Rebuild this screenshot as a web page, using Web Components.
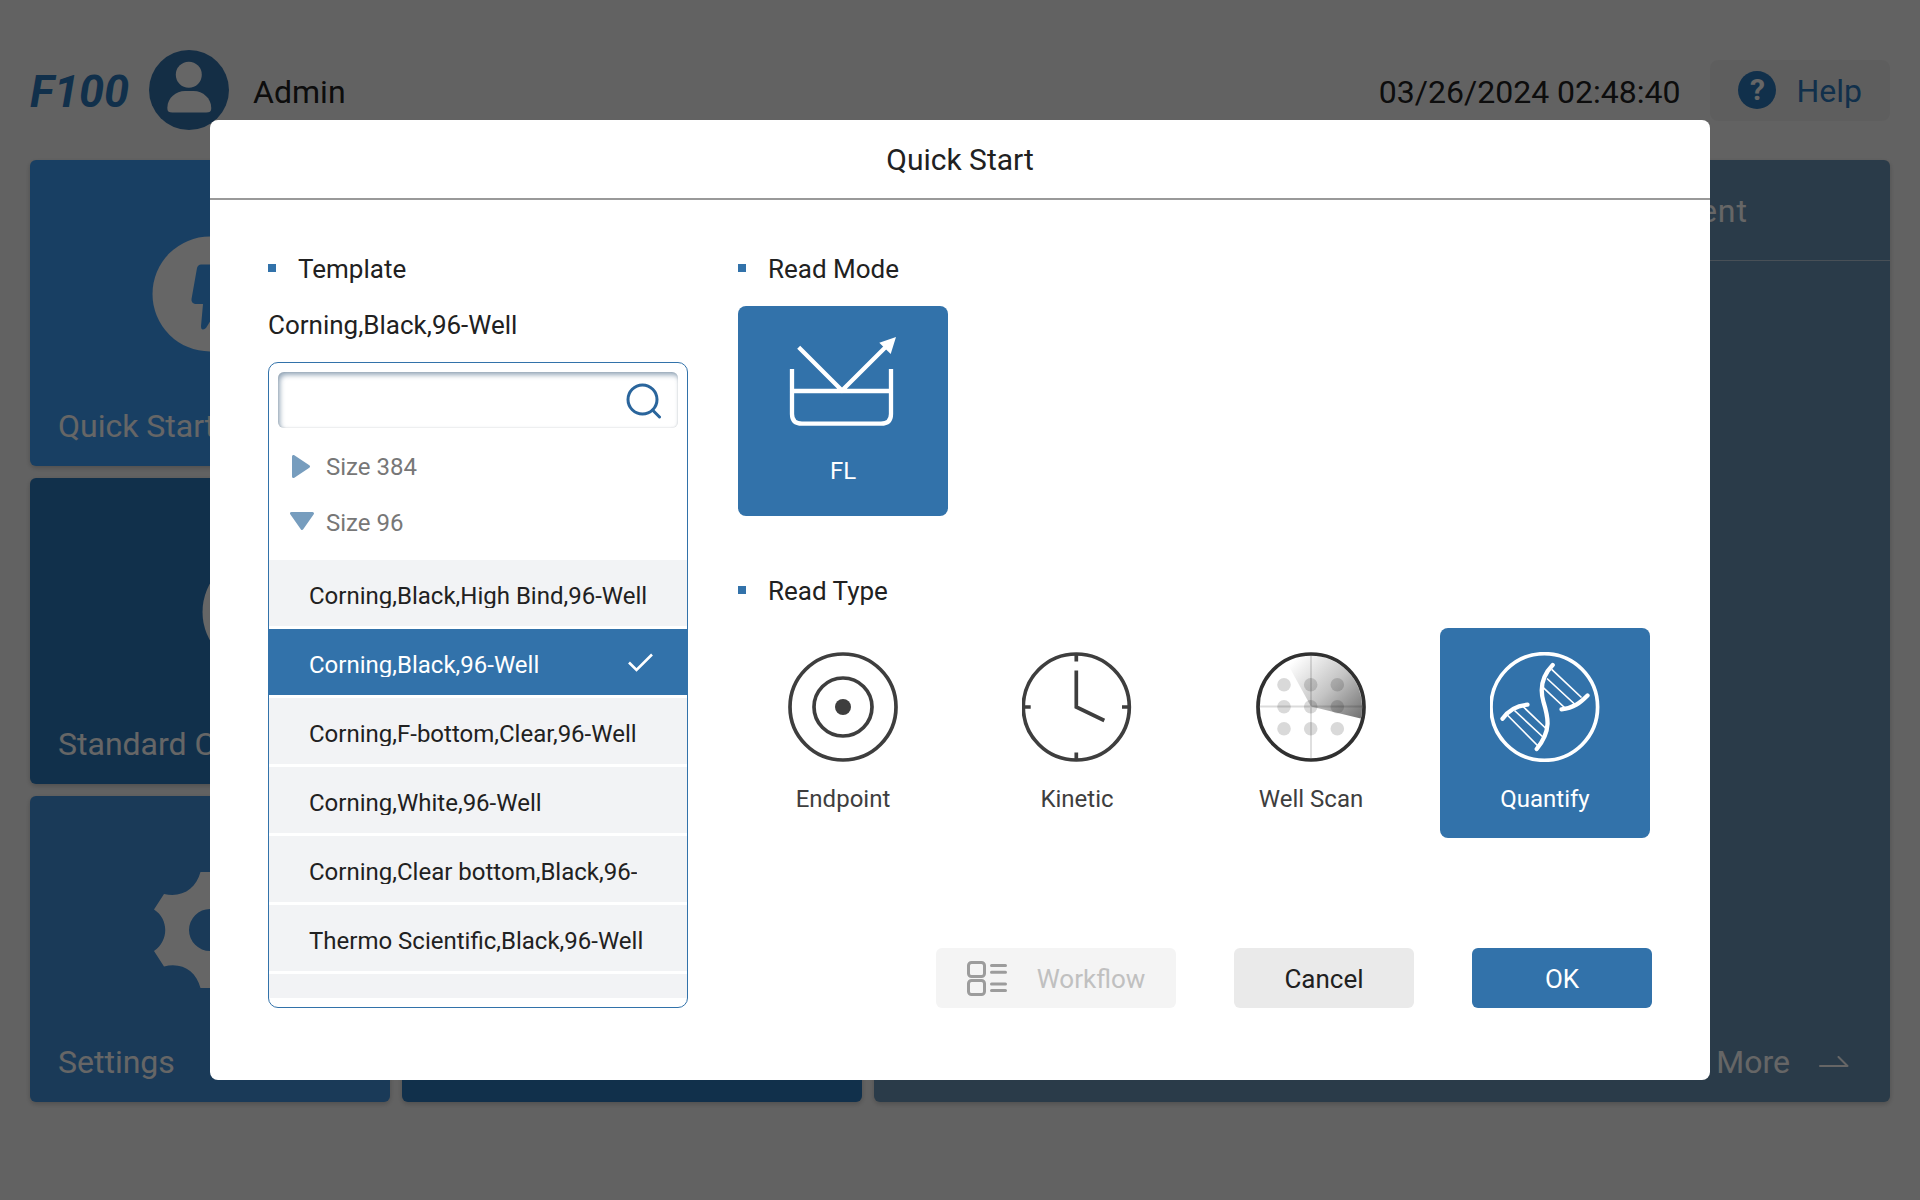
<!DOCTYPE html>
<html lang="en">
<head>
<meta charset="utf-8">
<title>F100 – Quick Start</title>
<style>
  html { --blue: #3272aa; --ink: #212121; }
  body { margin: 0; background: #f5f5f5; color: var(--ink); font-family: Roboto, "Liberation Sans", sans-serif; }
</style>
</head>
<body>
<f100-app></f100-app>

<script>
const define = (name, html) => {
  const template = document.createElement('template');
  template.innerHTML = html;
  customElements.define(name, class extends HTMLElement {
    constructor() {
      super();
      this.attachShadow({ mode: 'open' }).append(template.content.cloneNode(true));
    }
  });
};

/* ---------- home screen ---------- */

define('app-header', `
<style>
  :host { display: flex; align-items: center; height: 140px; padding: 20px 30px 0; font-size: 32px; line-height: 38px; }
  .brand, .user, time { padding-top: 3px; }
  .help span { padding-top: 2px; }
  .brand { font-size: 45px; font-weight: 700; font-style: italic; color: #2b78bc; line-height: 52px; }
  .avatar { width: 80px; height: 80px; margin: 0 24px 0 20px; }
  time { margin-left: auto; }
  .help { display: flex; align-items: center; gap: 20px; height: 61px; margin-left: 30px; padding: 0 28px; border: 0; border-radius: 8px;
          background: #ececec; color: #2b78bc; font: inherit; }
  .help i { display: grid; place-items: center; width: 38px; height: 38px; border-radius: 50%; background: #2b78bc; color: #fff;
            font-style: normal; font-weight: 700; font-size: 30px; line-height: 38px; }
</style>
<span class="brand">F100</span>
<svg class="avatar" viewBox="0 0 80 80" aria-hidden="true"><circle cx="40" cy="40" r="40" fill="#3473ad"/>
  <circle cx="39.8" cy="24.8" r="13" fill="#fff"/><path d="M18.4 57.500C18.400 48 27 41 36 41h8.500C54 41 62.200 48.500 62.200 57.500V59q0 3.600-5 3.600H23.400q-5 0-5-3.600z" fill="#fff"/></svg>
<span class="user">Admin</span>
<time datetime="2024-03-26T02:48:40">03/26/2024 02:48:40</time>
<button class="help" type="button"><i aria-hidden="true">?</i><span>Help</span></button>`);

define('nav-card', `
<style>
  :host { display: flex; min-width: 0; border-radius: 6px; background: var(--card, #2b78bc); box-shadow: 0 2px 5px rgba(0,0,0,.2); color: #fff; }
  button { flex: 1; display: flex; flex-direction: column; align-items: center; padding: 76px 28px 21px; border: 0; background: none; color: inherit;
           font: 32px/38px Roboto, sans-serif; }
  .label { margin-top: auto; align-self: flex-start; white-space: nowrap; }
</style>
<button type="button"><slot name="icon"></slot><span class="label"><slot></slot></span></button>`);

define('experiment-panel', `
<style>
  :host { display: flex; flex-direction: column; border-radius: 6px; background: #6994b6; box-shadow: 0 2px 5px rgba(0,0,0,.2); color: #fff; font-size: 32px; line-height: 38px; }
  header { display: flex; align-items: center; justify-content: flex-end; height: 101px; padding: 2px 142px 0 0; box-sizing: border-box; border-bottom: 1px solid #b4c9da; letter-spacing: 1px; }
  footer { margin-top: auto; display: flex; justify-content: flex-end; padding: 0 41px 21px; }
  a { display: flex; align-items: center; gap: 29px; color: inherit; text-decoration: none; }
</style>
<header>Experiment</header>
<footer><a href="#more">More <svg width="30" height="12" viewBox="0 0 30 12" fill="none" stroke="#fff" stroke-width="2" stroke-linecap="round" stroke-linejoin="round" aria-hidden="true"><path d="M1 10H28.500L19.500 1"/></svg></a></footer>`);

define('home-screen', `
<style>
  :host { display: flex; flex-direction: column; min-height: 100vh; }
  main { flex: 1; display: grid; grid-template-columns: 832fr 1016fr; gap: 12px; padding: 0 30px 98px; }
  .cards { display: flex; flex-direction: column; gap: 12px; }
  .row { flex: 1; display: grid; grid-template-columns: 360fr 460fr; gap: 12px; }
  .row.wide { grid-template-columns: 460fr 360fr; }
</style>
<app-header></app-header>
<main>
  <div class="cards">
    <div class="row">
      <nav-card style="--card:#3e9ef7">
        <svg slot="icon" width="116" height="116" viewBox="0 0 116 116" aria-hidden="true"><circle cx="58" cy="58" r="57.500" fill="#fff"/>
          <path d="M49 28.500H75L66 52H79L54 92Q49 96 49 90L51 68H43Q39 67 39.500 63L45 32Q46 28.500 49 28.500Z" fill="#3e9ef7"/></svg>Quick Start</nav-card>
      <nav-card></nav-card>
    </div>
    <div class="row wide">
      <nav-card>
        <svg slot="icon" width="116" height="116" viewBox="0 0 116 116" aria-hidden="true"><circle cx="58" cy="58" r="57.500" fill="#fff"/><path d="M34 34V82H84M40 74Q56 44 80 38" fill="none" stroke="#2b78bc" stroke-width="5"/></svg>Standard Curve</nav-card>
      <nav-card></nav-card>
    </div>
    <div class="row">
      <nav-card style="--card:#4191dc">
        <svg slot="icon" width="116" height="116" viewBox="0 0 116 116" aria-hidden="true"><path fill="#fff" fill-rule="evenodd" d="M48.500 0H67.500C72 17 85 26 104 22L114 37.500C99 47 99 69 114 79L104 94.500C85 90 72 99 67.500 116H48.500C44 99 30 90 12 94.500L2 79C17 69 17 47 2 37.500L12 22C30 26 44 17 48.500 0ZM58 37a21 21 0 1 0 0 42a21 21 0 1 0 0-42Z"/></svg>Settings</nav-card>
      <nav-card></nav-card>
    </div>
  </div>
  <experiment-panel></experiment-panel>
</main>`);

/* ---------- dialog parts ---------- */

define('modal-dialog', `
<style>
  :host { position: absolute; inset: 0; box-sizing: border-box; display: flex; padding: 120px 210px; background: rgba(0,0,0,.6); }
  section { flex: 1; display: flex; flex-direction: column; min-width: 0; border-radius: 8px; background: #fff; }
  h1 { margin: 0; padding-top: 2px; height: 76px; border-bottom: 2px solid #999; font-size: 30px; font-weight: 400; line-height: 76px; text-align: center; }
  .body { flex: 1; min-height: 0; display: flex; gap: 50px; padding: 54px 58px 72px; }
</style>
<section role="dialog" aria-modal="true" aria-labelledby="title">
  <h1 id="title"><slot name="title"></slot></h1>
  <div class="body"><slot></slot></div>
</section>`);

define('section-title', `
<style>
  :host { display: block; }
  h2 { display: flex; align-items: center; gap: 22px; margin: 0; font-size: 26px; font-weight: 400; line-height: 30px; }
  h2::before { content: ""; width: 8px; height: 8px; margin-bottom: 2px; background: var(--blue); }
</style>
<h2><slot></slot></h2>`);

define('tree-group', `
<style>
  :host { display: block; }
  button { display: flex; align-items: center; gap: 12px; width: 100%; height: 56px; padding: 0 21px; border: 0; background: none; color: #777; font: 24px/28px Roboto, sans-serif; }
  svg { width: 24px; height: 24px; fill: #779dbe; stroke: #779dbe; stroke-width: 3; stroke-linejoin: round; }
  .open, :host([open]) .closed { display: none; }
  :host([open]) .open { display: block; }
</style>
<button type="button">
  <svg class="closed" viewBox="0 0 24 24" aria-hidden="true"><path d="M3.500 1.500V21.500L18.500 11.500Z"/></svg>
  <svg class="open" viewBox="0 0 24 24" aria-hidden="true"><path d="M1.500 2.500H22.500L12 17.500Z"/></svg>
  <slot></slot>
</button>`);

define('template-item', `
<style>
  :host { display: block; }
  button { display: flex; justify-content: space-between; align-items: flex-start; width: 100%; height: 66px; padding: 22px 34px 0 40px; border: 0; background: #f2f3f5; color: var(--ink);
           font: 24px/28px Roboto, sans-serif; text-align: left; }
  span { height: 26px; overflow: hidden; white-space: nowrap; }
  svg { display: none; flex: none; width: 25px; height: 25px; }
  :host([selected]) button { background: var(--blue); color: #fff; }
  :host([selected]) svg { display: block; }
</style>
<button type="button"><span><slot></slot></span>
<svg viewBox="0 0 25 25" fill="none" stroke="#fff" stroke-width="2.600" aria-hidden="true"><path d="M1 11.500L8.500 19L24 3.500"/></svg></button>`);

define('template-picker', `
<style>
  :host { flex: 1; min-height: 0; display: flex; flex-direction: column; box-sizing: border-box; border: 1px solid var(--blue); border-radius: 10px; padding-bottom: 9px; }
  .search { display: flex; align-items: center; height: 56px; margin: 9px 9px 11px; padding: 0 16px; box-sizing: border-box; border-radius: 6px;
            box-shadow: inset 2px 3px 5px rgba(50,85,120,.5), inset 0 0 2px rgba(0,0,0,.14); }
  input { flex: 1; min-width: 0; height: 40px; padding: 0; border: 0; outline: 0; background: none; font: 24px/28px Roboto, sans-serif; }
  .list { flex: 1 1 0; min-height: 0; overflow: hidden; display: flex; flex-direction: column; gap: 3px; margin-top: 9px; }
</style>
<label class="search">
  <input type="text" aria-label="Search templates">
  <svg width="36" height="38" viewBox="0 0 36 38" fill="none" stroke="#2a659c" stroke-width="3" stroke-linecap="round" aria-hidden="true"><circle cx="16.500" cy="18.500" r="14.500"/><path d="M26.500 29L33.500 36"/></svg>
</label>
<slot name="group"></slot>
<div class="list"><slot></slot></div>`);

define('mode-tile', `
<style>
  :host { display: block; width: 210px; height: 210px; }
  button { display: flex; flex-direction: column; align-items: center; gap: 23px; width: 100%; height: 100%; padding: 24px 0 0; border: 0; border-radius: 8px;
           background: none; color: #3e3e3e; font: 24px/28px Roboto, sans-serif; }
  :host([selected]) button { background: var(--blue); color: #fff; }
  :host([raised]) button { padding-top: 18px; }
</style>
<button type="button"><slot name="icon"></slot><span><slot></slot></span></button>`);

define('action-button', `
<style>
  :host { display: block; }
  button { display: flex; align-items: center; justify-content: center; gap: 29px; min-width: 180px; height: 60px; padding: 1px 30px 0; border: 0; border-radius: 6px;
           background: #eaeaea; color: var(--ink); font: 26px/30px Roboto, sans-serif; }
  :host([primary]) button { background: var(--blue); color: #fff; }
  :host([muted]) button { min-width: 240px; background: #f4f4f4; color: #c0c0c0; }
</style>
<button type="button"><slot name="icon"></slot><slot></slot></button>`);

define('quick-start', `
<style>
  :host { display: contents; }
  .template { flex: none; width: 420px; display: flex; flex-direction: column; }
  .current { margin: 26px 0 22px; font-size: 26px; line-height: 30px; }
  .read { flex: 1; min-width: 0; display: flex; flex-direction: column; }
  .tiles { display: flex; gap: 24px; margin: 22px 0 60px; }
  .actions { display: flex; justify-content: flex-end; gap: 58px; margin-top: auto; }
</style>
<modal-dialog>
  <span slot="title">Quick Start</span>
  <div class="template">
    <section-title>Template</section-title>
    <div class="current">Corning,Black,96-Well</div>
    <template-picker>
      <tree-group slot="group">Size 384</tree-group>
      <tree-group slot="group" open>Size 96</tree-group>
      <template-item>Corning,Black,High Bind,96-Well</template-item>
      <template-item selected>Corning,Black,96-Well</template-item>
      <template-item>Corning,F-bottom,Clear,96-Well</template-item>
      <template-item>Corning,White,96-Well</template-item>
      <template-item>Corning,Clear bottom,Black,96-</template-item>
      <template-item>Thermo Scientific,Black,96-Well</template-item>
      <template-item></template-item>
    </template-picker>
  </div>
  <div class="read">
    <section-title>Read Mode</section-title>
    <div class="tiles">
      <mode-tile selected raised>
        <svg slot="icon" width="110" height="110" viewBox="0 0 110 110" fill="none" stroke="#fff" stroke-width="4.300" aria-hidden="true">
          <path d="M4 45V90Q4 99.700 14 99.700H93Q103 99.700 103 90V45M4 67H103M10.700 23.300L54 66.500L98.700 22"/><path d="M108 13L91.300 18.700L102.700 30Z" fill="#fff" stroke="none"/></svg>FL</mode-tile>
    </div>
    <section-title>Read Type</section-title>
    <div class="tiles">
      <mode-tile>
        <svg slot="icon" width="110" height="110" viewBox="0 0 110 110" fill="none" stroke="#3e3e3e" stroke-width="3.700" aria-hidden="true">
          <circle cx="55" cy="55" r="53"/><circle cx="55" cy="55" r="29"/><circle cx="55" cy="55" r="8" fill="#3e3e3e" stroke="none"/></svg>Endpoint</mode-tile>
      <mode-tile>
        <svg slot="icon" width="110" height="110" viewBox="0 0 110 110" fill="none" stroke="#3e3e3e" stroke-width="3.700" aria-hidden="true">
          <circle cx="54.300" cy="55" r="53"/><path d="M54.300 1V9.500M54.300 100.500V109M1 55H8.700M100 55H108M54.300 18.500V55L82.300 68.500"/></svg>Kinetic</mode-tile>
      <mode-tile>
        <svg slot="icon" width="110" height="110" viewBox="0 0 110 110" aria-hidden="true">
          <defs><linearGradient id="sweep" gradientUnits="userSpaceOnUse" x1="34" y1="12" x2="98" y2="76"><stop offset="0" stop-color="#fff"/><stop offset=".5" stop-color="#c4c4c4"/><stop offset="1" stop-color="#6e6e6e"/></linearGradient></defs>
          <path d="M55 54.500L30.600 10A51 51 0 0 1 104.700 66.500Z" fill="url(#sweep)"/>
          <path d="M55 3V106M4 54.500H106" stroke="#000" stroke-opacity=".14" stroke-width="1.800"/>
          <g fill="#000" fill-opacity=".15"><circle cx="28" cy="32.700" r="6.800"/><circle cx="54.700" cy="32.700" r="6.800"/><circle cx="81.300" cy="32.700" r="6.800"/><circle cx="28" cy="54.700" r="6.800"/><circle cx="54.700" cy="54.700" r="6.800"/><circle cx="81.300" cy="54.700" r="6.800"/><circle cx="28" cy="76.700" r="6.800"/><circle cx="54.700" cy="76.700" r="6.800"/><circle cx="81.300" cy="76.700" r="6.800"/></g>
          <circle cx="55" cy="55" r="53" fill="none" stroke="#303030" stroke-width="3.700"/></svg>Well Scan</mode-tile>
      <mode-tile selected>
        <svg slot="icon" width="110" height="110" viewBox="0 0 110 110" fill="none" stroke="#fff" aria-hidden="true">
          <circle cx="54.300" cy="55" r="53.300" stroke-width="3.700"/>
          <path stroke-width="4.300" stroke-linecap="round" d="M62.700 13C51 25 50 38 53.500 50C58 65 62 78 46.700 97M97.500 43.500C90 51 84 56 71.500 57.300M12.500 66.700C18 59 26 53.500 37.500 52.700"/>
          <path stroke-width="1.700" d="M61.700 17.300L91.500 45.500M57 26.500L84.500 52M53 35.300L75 56M17.300 63L48 94M24.500 58.500L53.500 85.500M33 54.500L57 77.500"/></svg>Quantify</mode-tile>
    </div>
    <div class="actions">
      <action-button muted>
        <svg slot="icon" width="41" height="35" viewBox="0 0 41 35" fill="none" stroke="#9c9c9c" stroke-width="3" stroke-linecap="round" aria-hidden="true"><rect x="1.500" y="1.500" width="16" height="14" rx="3"/><rect x="1.500" y="19.500" width="16" height="14" rx="3"/><path d="M24.500 4.600H38.500M24.500 11.200H38.500M24.500 23H38.500M24.500 29.600H38.500"/></svg>Workflow</action-button>
      <action-button>Cancel</action-button>
      <action-button primary>OK</action-button>
    </div>
  </div>
</modal-dialog>`);

define('f100-app', `
<style>:host { display: block; position: relative; }</style>
<home-screen></home-screen>
<quick-start></quick-start>`);
</script>
</body>
</html>
